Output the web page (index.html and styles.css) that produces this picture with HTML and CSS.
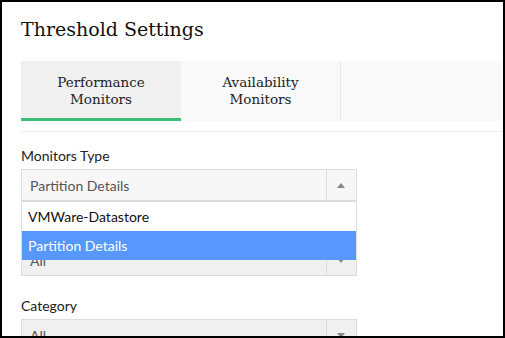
FILE: index.html
```html
<!DOCTYPE html>
<html lang="en">
<head>
    <meta charset="UTF-8">
    <meta name="viewport" content="width=device-width, initial-scale=1.0">
    <title>Threshold Settings</title>
    <link rel="stylesheet" href="styles.css">
</head>
<body>
    <div class="frame">
        <h2 class="page-title">Threshold Settings</h2>

        <!-- Monitor tabs -->
        <div class="tabs-wrap">
            <div class="tabs">
                <div class="tab active">Performance<br>Monitors</div>
                <div class="tab">Availability<br>Monitors</div>
            </div>
        </div>

        <div class="form">
            <div class="field">
                <label>Monitors Type</label>
                <div class="select open">
                    <span class="select-value">Partition Details</span>
                    <span class="select-arrow up"></span>
                    <ul class="dropdown">
                        <li>VMWare-Datastore</li>
                        <li class="selected">Partition Details</li>
                    </ul>
                </div>
            </div>

            <div class="field">
                <label>Monitor</label>
                <div class="select">
                    <span class="select-value">All</span>
                    <span class="select-arrow"></span>
                </div>
            </div>

            <div class="field">
                <label>Category</label>
                <div class="select">
                    <span class="select-value">All</span>
                    <span class="select-arrow"></span>
                </div>
            </div>
        </div>
    </div>
</body>
</html>
```

FILE: styles.css
```css
/* Page frame */
body {
    margin: 0;
    background: #fff;
    font-family: Lato, "Open Sans", sans-serif;
    color: #222;
}

.frame {
    box-sizing: border-box;
    width: 505px;
    height: 338px;
    border: 2px solid #000;
    padding-left: 19px;
    overflow: hidden;
}

.page-title {
    margin: 0;
    padding-top: 16px;
    height: 59px;
    box-sizing: border-box;
    font-family: "DejaVu Serif", serif;
    font-size: 19px;
    font-weight: normal;
    line-height: 23px;
    color: #111;
}

/* Tabs */
.tabs-wrap {
    padding-bottom: 10px;
    border-bottom: 1px solid #ececec;
}

.tabs {
    display: flex;
    height: 60px;
    background: #f9f9f9;
}

.tab {
    box-sizing: border-box;
    width: 160px;
    display: flex;
    align-items: center;
    justify-content: center;
    text-align: center;
    font-family: "DejaVu Serif", serif;
    font-size: 13.5px;
    line-height: 17px;
    color: #222;
    border-right: 1px solid #e8e8e8;
}

.tab.active {
    background: #f0f0f0;
    border-right: none;
    border-bottom: 3px solid #3dbb78;
    padding-top: 2px;
}

/* Form */
.form {
    padding-top: 15px;
}

.field {
    width: 336px;
    margin-bottom: 21px;
}

.field label {
    display: block;
    font-size: 14px;
    line-height: 18px;
    margin-bottom: 4px;
}

.select {
    position: relative;
    box-sizing: border-box;
    height: 32px;
    border: 1px solid #dcdcdc;
    background: #f0f0f0;
    display: flex;
    align-items: center;
}

.select.open {
    background: #f7f7f7;
}

.select-value {
    flex: 1;
    padding-left: 8px;
    font-size: 14px;
    color: #555;
}

.select-arrow {
    box-sizing: border-box;
    width: 30px;
    height: 100%;
    border-left: 1px solid #dcdcdc;
    position: relative;
}

.select-arrow::after {
    content: "";
    position: absolute;
    left: 10px;
    top: 13px;
    border-left: 4px solid transparent;
    border-right: 4px solid transparent;
    border-top: 5px solid #888;
}

.select-arrow.up::after {
    border-top: none;
    border-bottom: 5px solid #888;
}

/* Open dropdown list */
.dropdown {
    position: absolute;
    top: 31px;
    left: -1px;
    right: -1px;
    margin: 0;
    padding: 0;
    list-style: none;
    background: #fff;
    border: 1px solid #dcdcdc;
    border-bottom: none;
    z-index: 5;
}

.dropdown li {
    height: 29px;
    line-height: 29px;
    padding-left: 6px;
    font-size: 14px;
    color: #111;
}

.dropdown li.selected {
    background: #5897fb;
    color: #fff;
}
```
